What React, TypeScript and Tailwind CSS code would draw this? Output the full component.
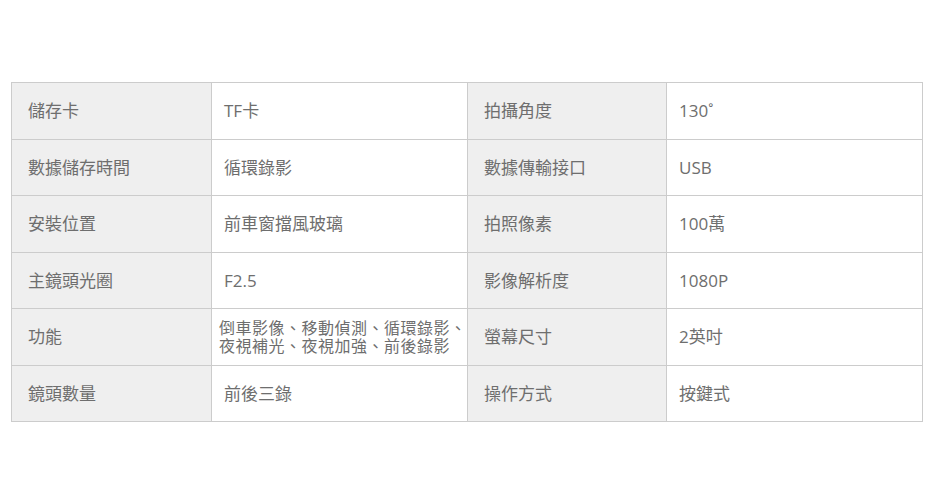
const rows: [string, string, string, string][] = [
  ["儲存卡", "TF卡", "拍攝角度", "130˚"],
  ["數據儲存時間", "循環錄影", "數據傳輸接口", "USB"],
  ["安裝位置", "前車窗擋風玻璃", "拍照像素", "100萬"],
  ["主鏡頭光圈", "F2.5", "影像解析度", "1080P"],
  ["功能", "倒車影像、移動偵測、循環錄影、夜視補光、夜視加強、前後錄影", "螢幕尺寸", "2英吋"],
  ["鏡頭數量", "前後三錄", "操作方式", "按鍵式"],
];

export default function App() {
  return (
    <div
      className="w-[931px] h-[501px] bg-white pt-[82px] pl-[11px]"
      style={{ fontFamily: '"Open Sans", "Noto Sans CJK TC", sans-serif' }}
    >
      <table className="w-[911px] border-collapse table-fixed text-[#6e6e6e] text-[17px]">
        <colgroup>
          <col className="w-[200px]" />
          <col className="w-[256px]" />
          <col className="w-[199px]" />
          <col className="w-[256px]" />
        </colgroup>
        <tbody>
          {rows.map((r, i) => (
            <tr key={i} className="h-[56.5px]">
              <td className="border border-[#cccccc] bg-[#efefef] pl-4 align-middle">{r[0]}</td>
              <td
                className={
                  i === 4
                    ? "border border-[#cccccc] pl-[7px] pr-0 align-middle text-[16px] leading-[18px] tracking-[0.5px]"
                    : "border border-[#cccccc] pl-3 align-middle"
                }
              >
                {r[1]}
              </td>
              <td className="border border-[#cccccc] bg-[#efefef] pl-4 align-middle">{r[2]}</td>
              <td className="border border-[#cccccc] pl-3 align-middle">{r[3]}</td>
            </tr>
          ))}
        </tbody>
      </table>
    </div>
  );
}
